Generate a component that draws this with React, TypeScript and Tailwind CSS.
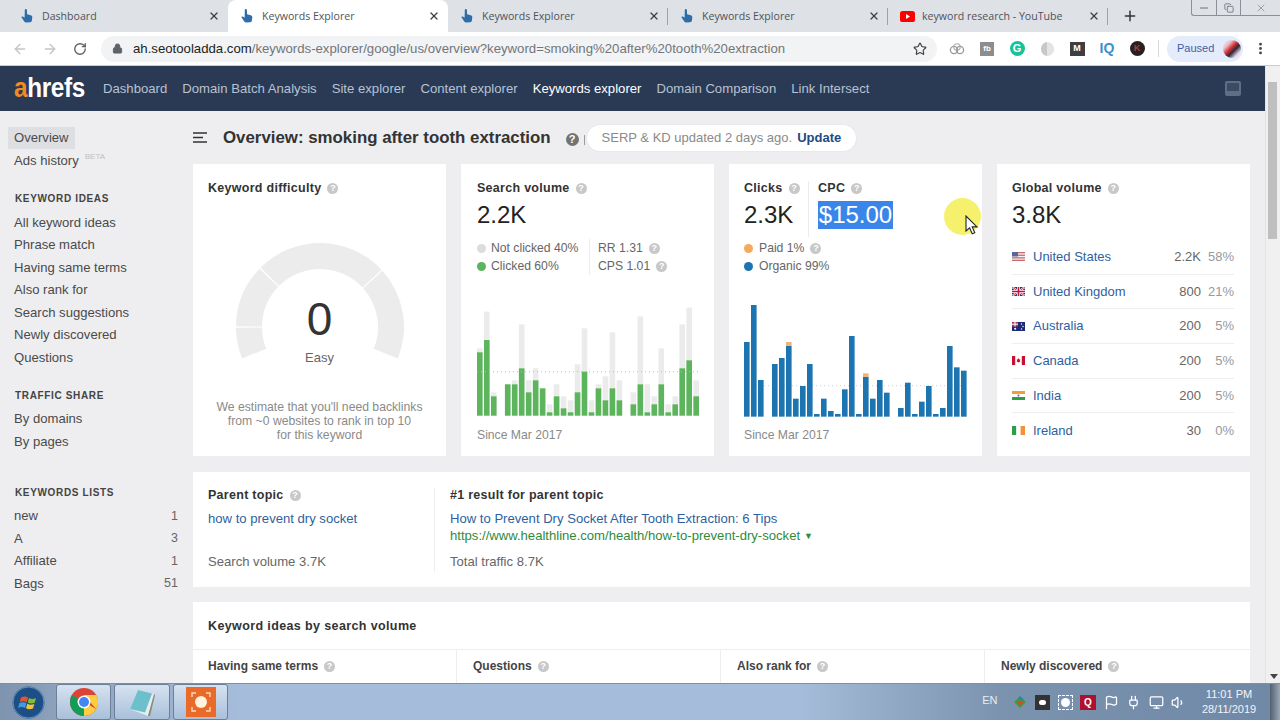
import React from "react";
import { ArrowLeft, ArrowRight, RotateCw, Lock, Star, Plus, X, MoreVertical, Flag, Volume1, Plug, Monitor, Minus, Copy } from "lucide-react";

const Hand = () => (
  <svg width="14" height="16" viewBox="0 0 14 16" className="shrink-0">
    <path d="M5.200 1.200c.7-.6 1.600-.2 1.700.7l.2 4.400 3.600 1c1 .3 1.600 1 1.600 2l-.4 3.200c-.2 1-.8 1.600-1.800 1.700l-4 .2c-.8 0-1.400-.3-1.800-1L1.600 9.600c-.4-.7.5-1.500 1.200-1l1.800 1.200L4.800 2c0-.3.2-.6.4-.8z" fill="#2f6da8" />
  </svg>
);

const Yt = () => (
  <svg width="15" height="11" viewBox="0 0 15 11" className="shrink-0">
    <rect width="15" height="11" rx="2.6" fill="#f00" />
    <path d="M6 3l4 2.500L6 8z" fill="#fff" />
  </svg>
);

const Tab = ({ title, active, yt, sep }: { title: string; active?: boolean; yt?: boolean; sep?: boolean }) => (
  <div className={`relative w-[220px] h-full flex items-center shrink-0 pl-[12px] pr-[8px] ${active ? "bg-white rounded-t-lg" : ""}`}>
    <span className="w-[14px] flex justify-center">{yt ? <Yt /> : <Hand />}</span>
    <span className="ml-[8px] mt-[1px] text-[10.6px] text-[#50535a] flex-1 whitespace-nowrap" style={{ fontFamily: "'Open Sans', sans-serif" }}>{title}</span>
    <X size={12} strokeWidth={2.6} className="text-[#3c4043]" />
    {sep && <span className="absolute right-0 top-[8px] h-[17px] w-px bg-[#9ea2a8]" />}
  </div>
);

const Q = ({ dark, size = 11 }: { dark?: boolean; size?: number }) => (
  <span
    className={`inline-flex items-center justify-center rounded-full text-white font-bold shrink-0 ${dark ? "bg-[#737373]" : "bg-[#c8c8c8]"}`}
    style={{ width: size, height: size, fontSize: size - 2, lineHeight: 1 }}
  >
    ?
  </span>
);

const SideItem = ({ label, count, active }: { label: string; count?: string; active?: boolean }) => (
  <div className="h-[22.5px] flex items-center justify-between text-[13.1px] text-[#4a4a4a] pr-[15px]">
    <span className={`pl-[6px] pr-[6px] ml-[8px] h-[22px] leading-[22px] ${active ? "bg-[#dedfe3]" : ""}`}>{label}</span>
    {count && <span className="text-[#666] text-[12.5px]">{count}</span>}
  </div>
);

const SideHead = ({ label, cls }: { label: string; cls: string }) => (
  <div className={`pl-[15px] h-[14px] leading-[14px] text-[10px] font-bold tracking-[0.65px] text-[#444] ${cls}`}>{label}</div>
);

const greens: [number, number][] = [
  [172, 160], [135, 50], [304, 292], [362, 362], [268, 268], [268, 256], [220, 88], [292, 256],
  [256, 220], [280, 280], [352, 328], [304, 268], [340, 304], [352, 316], [292, 208], [230, 100],
  [352, 316], [280, 268], [316, 244], [280, 112], [316, 256], [362, 362], [328, 292], [268, 64],
  [352, 268], [328, 304], [268, 160], [352, 328], [328, 304], [220, 88], [196, 38], [304, 256],
];
const blues: [number, number?][] = [
  [138], [27], [252], [362], [204], [186], [150, 138], [308], [270], [204], [354], [308], [345], [354], [280], [120],
  [354], [243, 232], [308], [252], [290], [362], [336], [260], [354], [317], [270], [354], [336], [150], [214], [224],
];

const GreenChart = () => (
  <svg width="223" height="121" viewBox="0 0 223 121" className="block">
    {greens.map(([g, t], i) => (
      <g key={i}>
        <rect x={i * 6.98} y={t / 3} width="5.6" height={(362 - t) / 3} fill="#ebebeb" />
        <rect x={i * 6.98} y={g / 3} width="5.6" height={(362 - g) / 3} fill="#5cb55c" />
      </g>
    ))}
    <line x1="0" x2="222" y1="76.7" y2="76.7" stroke="#bdbdbd" strokeDasharray="1 3" />
  </svg>
);

const BlueChart = () => (
  <svg width="224" height="121" viewBox="0 0 224 121" className="block">
    <line x1="0" x2="224" y1="89.7" y2="89.7" stroke="#cfcfcf" strokeDasharray="1 3" />
    {blues.map(([b, o], i) => (
      <g key={i}>
        {o !== undefined && <rect x={i * 7} y={o / 3} width="5.6" height={(b - o) / 3} fill="#f0b47a" />}
        <rect x={i * 7} y={b / 3} width="5.6" height={(362 - b) / 3} fill="#1c75b0" />
      </g>
    ))}
  </svg>
);

const arc = (a0: number, a1: number, R = 84, r = 58, c = 86) => {
  const p = (a: number, q: number) => {
    const t = (a * Math.PI) / 180;
    return `${(c + q * Math.cos(t)).toFixed(2)} ${(c + q * Math.sin(t)).toFixed(2)}`;
  };
  return `M${p(a0, R)}A${R} ${R} 0 0 1 ${p(a1, R)}L${p(a1, r)}A${r} ${r} 0 0 0 ${p(a0, r)}Z`;
};

const Gauge = () => (
  <svg width="172" height="126" viewBox="0 0 172 126" className="block">
    <path d={arc(158, 179.5)} fill="#ececec" />
    <path d={arc(180.5, 224)} fill="#ececec" />
    <path d={arc(225, 317)} fill="#ececec" />
    <path d={arc(318, 382)} fill="#ececec" />
  </svg>
);

const FlagUS = () => (
  <svg width="13" height="9" viewBox="0 0 13 9">
    <rect width="13" height="9" fill="#f3f3f3" />
    <rect y="0" width="13" height="1.3" fill="#c96a70" />
    <rect y="2.6" width="13" height="1.3" fill="#c96a70" />
    <rect y="5.2" width="13" height="1.3" fill="#c96a70" />
    <rect y="7.7" width="13" height="1.3" fill="#c96a70" />
    <rect width="6" height="4.5" fill="#5a659c" />
  </svg>
);
const FlagUK = () => (
  <svg width="13" height="9" viewBox="0 0 13 9">
    <rect width="13" height="9" fill="#2a3570" />
    <path d="M0 0l13 9M13 0L0 9" stroke="#fff" strokeWidth="2" />
    <path d="M0 0l13 9M13 0L0 9" stroke="#c8102e" strokeWidth="0.8" />
    <path d="M6.500 0v9M0 4.500h13" stroke="#fff" strokeWidth="3" />
    <path d="M6.500 0v9M0 4.500h13" stroke="#c8102e" strokeWidth="1.6" />
  </svg>
);
const FlagAU = () => (
  <svg width="13" height="9" viewBox="0 0 13 9">
    <rect width="13" height="9" fill="#1d2a78" />
    <rect width="6" height="4.5" fill="#b23a55" />
    <path d="M0 2.200h6M3 0v4.500" stroke="#fff" strokeWidth="1" />
    <circle cx="3.2" cy="6.8" r="1" fill="#fff" />
    <circle cx="9.5" cy="2" r=".7" fill="#fff" />
    <circle cx="11" cy="4.5" r=".7" fill="#fff" />
    <circle cx="9.5" cy="7" r=".7" fill="#fff" />
  </svg>
);
const FlagCA = () => (
  <svg width="13" height="9" viewBox="0 0 13 9">
    <rect width="13" height="9" fill="#fff" />
    <rect width="3.2" height="9" fill="#c8102e" />
    <rect x="9.8" width="3.2" height="9" fill="#c8102e" />
    <path d="M6.500 2l.8 1.500 1-.3-.4 1.600.6.4-2 1.300-2-1.300.6-.4-.4-1.600 1 .3z" fill="#c8102e" />
  </svg>
);
const FlagIN = () => (
  <svg width="13" height="9" viewBox="0 0 13 9">
    <rect width="13" height="3" fill="#f29c3f" />
    <rect y="3" width="13" height="3" fill="#fff" />
    <rect y="6" width="13" height="3" fill="#2f9c46" />
    <circle cx="6.5" cy="4.5" r="1" fill="#55609c" />
  </svg>
);
const FlagIE = () => (
  <svg width="13" height="9" viewBox="0 0 13 9">
    <rect width="4.4" height="9" fill="#2f9c46" />
    <rect x="4.4" width="4.2" height="9" fill="#fff" />
    <rect x="8.6" width="4.4" height="9" fill="#f2913a" />
  </svg>
);

const countries: [React.ReactNode, string, string, string][] = [
  [<FlagUS />, "United States", "2.2K", "58%"],
  [<FlagUK />, "United Kingdom", "800", "21%"],
  [<FlagAU />, "Australia", "200", "5%"],
  [<FlagCA />, "Canada", "200", "5%"],
  [<FlagIN />, "India", "200", "5%"],
  [<FlagIE />, "Ireland", "30", "0%"],
];

const Title = ({ children }: { children: React.ReactNode }) => (
  <span className="text-[12.5px] font-bold text-[#333] tracking-[0.28px] whitespace-nowrap">{children}</span>
);

const Dot = ({ c }: { c: string }) => <span className={`w-[9px] h-[9px] rounded-full shrink-0 ${c}`} />;

const NavLink = ({ t, active }: { t: string; active?: boolean }) => (
  <span className={`text-[13.15px] whitespace-nowrap ${active ? "text-white" : "text-[#b7c2d3]"}`}>{t}</span>
);

const Ext = ({ children }: { children: React.ReactNode }) => (
  <span className="w-[30px] flex items-center justify-center">{children}</span>
);

const TaskBtn = ({ children, cls }: { children: React.ReactNode; cls: string }) => (
  <div className={`h-[36px] rounded-[3px] border border-[#6b7f97] flex items-center justify-center bg-[linear-gradient(180deg,#d6e2f0,#a9c0da)] ${cls}`}>
    {children}
  </div>
);

export default function App() {
  return (
    <div className="w-[1280px] h-[720px] overflow-hidden flex flex-col bg-[#eeeef0]" style={{ fontFamily: "'Liberation Sans', Arial, sans-serif" }}>
      {/* tab strip */}
      <div className="relative h-[32px] bg-[#dee1e6] flex items-stretch pl-[8px] shrink-0">
        <Tab title="Dashboard" />
        <Tab title="Keywords Explorer" active />
        <Tab title="Keywords Explorer" sep />
        <Tab title="Keywords Explorer" sep />
        <Tab title="keyword research - YouTube" yt sep />
        <Plus size={16} strokeWidth={2.2} className="ml-[14px] mt-[8px] text-[#333]" />
        <div className="absolute right-0 top-0 w-[89px] h-[16px] border border-t-0 border-r-0 border-[#8b8f96] rounded-bl-[3px] flex text-[#6c6f75]">
          <span className="w-[25px] flex items-center justify-center border-r border-[#8b8f96]"><Minus size={12} /></span>
          <span className="w-[24px] flex items-center justify-center border-r border-[#8b8f96]"><Copy size={10} /></span>
          <span className="flex-1 flex items-center justify-center"><X size={12} className="text-[#9b9ea3]" /></span>
        </div>
      </div>

      {/* toolbar */}
      <div className="h-[34px] bg-white flex items-center shrink-0 border-b border-[#c9cbcf] text-[#5f6368]">
        <ArrowLeft size={16} className="ml-[12px] text-[#c2c5ca]" />
        <ArrowRight size={16} className="ml-[14px] text-[#c2c5ca]" />
        <RotateCw size={14} strokeWidth={2.4} className="ml-[15px] text-[#5f6368]" />
        <div className="ml-[14px] w-[836px] h-[26px] rounded-full bg-[#f1f3f4] flex items-center pl-[11px] pr-[10px]">
          <Lock size={11} fill="#5f6368" className="shrink-0" />
          <span className="ml-[10px] text-[13.2px] flex-1 whitespace-nowrap text-[#72767b]">
            <span className="text-[#222]">ah.seotooladda.com</span>/keywords-explorer/google/us/overview?keyword=smoking%20after%20tooth%20extraction
          </span>
          <Star size={14} strokeWidth={2} className="text-[#444]" />
        </div>
        <div className="ml-[5px] flex items-center">
          <Ext>
            <svg width="16" height="12" viewBox="0 0 16 12"><circle cx="5" cy="7" r="3.6" fill="none" stroke="#999" strokeWidth="1.3" /><circle cx="11" cy="7" r="3.6" fill="none" stroke="#999" strokeWidth="1.3" /><circle cx="8" cy="4" r="3.2" fill="none" stroke="#aaa" strokeWidth="1.1" /></svg>
          </Ext>
          <Ext><span className="w-[14px] h-[14px] bg-[#8d8d8d] text-white text-[8px] font-bold flex items-center justify-center">fb</span></Ext>
          <Ext><span className="w-[15px] h-[15px] rounded-full bg-[#15c39a] text-white text-[11px] font-bold flex items-center justify-center">G</span></Ext>
          <Ext><span className="w-[13px] h-[14px] rounded-full bg-[linear-gradient(90deg,#c8c8c8_50%,#e4e4e4_50%)]" /></Ext>
          <Ext><span className="w-[15px] h-[14px] bg-[#3f3f3f] text-white text-[9px] font-bold flex items-center justify-center">M</span></Ext>
          <Ext><span className="text-[14px] font-bold text-[#3d8fc9]">IQ</span></Ext>
          <Ext><span className="w-[15px] h-[15px] rounded-full bg-[#26211f] text-[#b23a3a] text-[9px] font-bold flex items-center justify-center">K</span></Ext>
        </div>
        <span className="ml-[6px] w-px h-[17px] bg-[#d5d7da]" />
        <div className="ml-[8px] w-[76px] h-[26px] rounded-full bg-[#e4ebfa] flex items-center pl-[10px]">
          <span className="text-[11px] text-[#3f5fa8]">Paused</span>
          <span className="ml-[9px] w-[18px] h-[18px] rounded-full bg-[linear-gradient(135deg,#e9c6d6_25%,#d32f2f_45%,#2a2a3a_60%,#e9d6e6_80%)]" />
        </div>
        <MoreVertical size={15} strokeWidth={2.6} className="ml-[10px] text-[#444]" />
      </div>

      {/* page + scrollbar */}
      <div className="flex-1 flex min-h-0">
        <div className="w-[1265px] flex flex-col min-h-0">
          {/* nav */}
          <div className="h-[45px] bg-[#2a3a55] flex items-center shrink-0 pl-[14px] pr-[24px]">
            <span className="w-[71px] text-[27px] font-bold tracking-[-0.4px] leading-none text-white inline-block origin-left scale-x-90 whitespace-nowrap"><span className="text-[#f08a24]">a</span>hrefs</span>
            <div className="ml-[18px] flex gap-[15px]">
              <NavLink t="Dashboard" />
              <NavLink t="Domain Batch Analysis" />
              <NavLink t="Site explorer" />
              <NavLink t="Content explorer" />
              <NavLink t="Keywords explorer" active />
              <NavLink t="Domain Comparison" />
              <NavLink t="Link Intersect" />
            </div>
            <div className="ml-auto w-[16px] h-[15px] rounded-[2px] bg-[#5f6d85] flex items-start justify-center pt-[2px]">
              <span className="w-[12px] h-[8px] bg-[#3c4a63]" />
            </div>
          </div>

          {/* body */}
          <div className="flex-1 flex min-h-0">
            {/* sidebar */}
            <aside className="w-[193px] shrink-0 pt-[16px]">
              <SideItem label="Overview" active />
              <div className="h-[22.5px] flex items-center text-[13.1px] text-[#4a4a4a] pl-[14px]">
                Ads history
                <span className="ml-[6px] mb-[8px] text-[8px] text-[#c0c0c0]">BETA</span>
              </div>
              <SideHead label="KEYWORD IDEAS" cls="mt-[20px] mb-[5.5px]" />
              {["All keyword ideas", "Phrase match", "Having same terms", "Also rank for", "Search suggestions", "Newly discovered", "Questions"].map((t) => (
                <SideItem key={t} label={t} />
              ))}
              <SideHead label="TRAFFIC SHARE" cls="mt-[19.5px] mb-[5.5px]" />
              <SideItem label="By domains" />
              <SideItem label="By pages" />
              <SideHead label="KEYWORDS LISTS" cls="mt-[33px] mb-[5px]" />
              <SideItem label="new" count="1" />
              <SideItem label="A" count="3" />
              <SideItem label="Affiliate" count="1" />
              <SideItem label="Bags" count="51" />
            </aside>

            {/* main */}
            <main className="flex-1 min-w-0 pr-[15px] overflow-hidden">
              <div className="h-[53px] flex items-center">
                <svg width="14" height="11" viewBox="0 0 14 11" className="shrink-0">
                  <path d="M0 1h14M0 5.500h10M0 10h14" stroke="#333" strokeWidth="1.6" />
                </svg>
                <h1 className="ml-[16px] text-[16.85px] font-bold text-[#333] whitespace-nowrap">Overview: smoking after tooth extraction</h1>
                <span className="ml-[15px]"><Q dark size={13} /></span>
                <span className="ml-[5px] w-px h-[10px] mt-[4px] bg-[#999]" />
                <div className="ml-[2px] w-[269px] h-[26px] rounded-full bg-white shadow-[0_0_2px_rgba(0,0,0,0.08)] flex items-center pl-[15px] text-[13px] whitespace-nowrap text-[#8a8a8a]">
                  SERP &amp; KD updated 2 days ago.<span className="ml-[5px] font-bold text-[13px] text-[#1e4a84]">Update</span>
                </div>
              </div>

              <div className="grid grid-cols-4 gap-[15px] h-[292px]">
                {/* KD */}
                <div className="bg-white flex flex-col pl-[15px] pr-[15px] pt-[17px] items-start">
                  <div className="flex items-center gap-[6px] h-[14px]"><Title>Keyword difficulty</Title><Q /></div>
                  <div className="relative self-center mt-[46px] w-[172px]">
                    <Gauge />
                    <div className="absolute inset-x-0 top-[53px] text-center text-[46px] leading-[50px] text-[#333]">0</div>
                    <div className="absolute inset-x-0 top-[109px] text-center text-[13px] leading-[16px] text-[#666]">Easy</div>
                  </div>
                  <p className="self-center mt-[33px] text-center text-[12.2px] leading-[14.2px] text-[#8a8a8a] whitespace-nowrap">
                    We estimate that you'll need backlinks<br />from ~0 websites to rank in top 10<br />for this keyword
                  </p>
                </div>

                {/* Search volume */}
                <div className="bg-white flex flex-col pl-[16px] pt-[17px]">
                  <div className="flex items-center gap-[6px] h-[14px]"><Title>Search volume</Title><Q /></div>
                  <div className="mt-[5px] h-[30px] text-[24px] leading-[30px] text-[#222]">2.2K</div>
                  <div className="mt-[9px] flex h-[36px] text-[12.2px] text-[#666]">
                    <div className="w-[112px] flex flex-col">
                      <div className="h-[18px] flex items-center gap-[5px]"><Dot c="bg-[#dcdcdc]" />Not clicked 40%</div>
                      <div className="h-[18px] flex items-center gap-[5px]"><Dot c="bg-[#5cb55c]" />Clicked 60%</div>
                    </div>
                    <div className="border-l border-[#ececec] pl-[8px] flex flex-col">
                      <div className="h-[18px] flex items-center gap-[6px]">RR 1.31 <Q /></div>
                      <div className="h-[18px] flex items-center gap-[6px]">CPS 1.01 <Q /></div>
                    </div>
                  </div>
                  <div className="mt-[20px]"><GreenChart /></div>
                  <div className="mt-[11.5px] text-[12.2px] leading-[14px] text-[#8a8a8a]">Since Mar 2017</div>
                </div>

                {/* Clicks/CPC */}
                <div className="relative bg-white flex flex-col pl-[15px] pt-[17px]">
                  <div className="flex h-[56px]">
                    <div className="w-[65px] border-r border-[#ececec]">
                      <div className="flex items-center gap-[6px] h-[14px]"><Title>Clicks</Title><Q /></div>
                      <div className="mt-[5px] text-[24px] leading-[30px] text-[#222]">2.3K</div>
                    </div>
                    <div className="pl-[9px]">
                      <div className="flex items-center gap-[6px] h-[14px]"><Title>CPC</Title><Q /></div>
                      <div className="mt-[6px] h-[28px] w-[75px] bg-[#3a86e8] text-white text-[24px] leading-[28px] text-center">$15.00</div>
                    </div>
                  </div>
                  <div className="mt-[2px] flex flex-col h-[36px] text-[12.2px] text-[#666]">
                    <div className="h-[18px] flex items-center gap-[6px]"><Dot c="bg-[#f4a95f]" />Paid 1% <Q /></div>
                    <div className="h-[18px] flex items-center gap-[6px]"><Dot c="bg-[#1c75b0]" />Organic 99%</div>
                  </div>
                  <div className="mt-[21px]"><BlueChart /></div>
                  <div className="mt-[10.5px] text-[12.2px] leading-[14px] text-[#8a8a8a]">Since Mar 2017</div>
                  {/* highlighted cursor */}
                  <div className="absolute left-[215px] top-[34px] w-[37px] h-[37px] rounded-full bg-[#f6f16c]" />
                  <svg width="14" height="20" viewBox="0 0 14 20" className="absolute left-[236px] top-[51px]">
                    <path d="M1 1v15l3.600-3.200 2.600 6 2.600-1.100-2.600-5.800H12z" fill="#fff" stroke="#222" strokeWidth="1.1" />
                  </svg>
                </div>

                {/* Global */}
                <div className="bg-white flex flex-col pl-[15px] pr-[16px] pt-[17px]">
                  <div className="flex items-center gap-[6px] h-[14px]"><Title>Global volume</Title><Q /></div>
                  <div className="mt-[5px] h-[30px] text-[24px] leading-[30px] text-[#222]">3.8K</div>
                  <div className="mt-[10px] flex flex-col">
                    {countries.map(([f, n, v, p], i) => (
                      <div key={n} className={`h-[34.7px] flex items-center text-[13px] ${i < 5 ? "border-b border-[#eeeeee]" : ""}`}>
                        <span className="w-[21px] flex items-center shrink-0">{f}</span>
                        <span className="text-[#2f5f9e]">{n}</span>
                        <span className="ml-auto text-[#666]">{v}</span>
                        <span className="w-[33px] text-right text-[#999]">{p}</span>
                      </div>
                    ))}
                  </div>
                </div>
              </div>

              {/* parent */}
              <div className="mt-[16px] h-[115px] bg-white flex pt-[15.5px] pb-[15px] pl-[15px] text-[13.1px]">
                <div className="w-[227px] border-r border-[#eeeeee] flex flex-col">
                  <div className="flex items-center gap-[6px] h-[16px]"><Title>Parent topic</Title><Q /></div>
                  <a className="mt-[7px] h-[16px] leading-[16px] text-[#2f5f9e]">how to prevent dry socket</a>
                  <span className="mt-[27px] h-[16px] leading-[16px] text-[#666]">Search volume 3.7K</span>
                </div>
                <div className="pl-[15px] flex flex-col">
                  <div className="h-[16px] flex items-center"><Title>#1 result for parent topic</Title></div>
                  <a className="mt-[7px] h-[16px] leading-[16px] text-[#2f5f9e]">How to Prevent Dry Socket After Tooth Extraction: 6 Tips</a>
                  <span className="mt-[1px] h-[16px] leading-[16px] text-[#2e8b3d] flex items-center gap-[4px] whitespace-nowrap">https://www.healthline.com/health/how-to-prevent-dry-socket <span className="text-[9px]">▼</span></span>
                  <span className="mt-[10px] h-[16px] leading-[16px] text-[#666]">Total traffic 8.7K</span>
                </div>
              </div>

              {/* ideas */}
              <div className="mt-[15px] bg-white h-[100px]">
                <div className="h-[47px] flex items-center pl-[15px] pt-[1px]"><span className="text-[12.5px] font-bold text-[#333] tracking-[0.38px] whitespace-nowrap">Keyword ideas by search volume</span></div>
                <div className="grid grid-cols-[264px_264px_264px_1fr] h-[53px] border-t border-[#eeeeee]">
                  {["Having same terms", "Questions", "Also rank for", "Newly discovered"].map((t, i) => (
                    <div key={t} className={`pt-[8px] ${i < 3 ? "border-r border-[#eeeeee]" : ""} ${i > 0 ? "pl-[16px]" : "pl-[15px]"}`}>
                      <div className="flex items-center gap-[6px] h-[16px]"><span className="text-[12px] font-bold text-[#444] whitespace-nowrap">{t}</span><Q /></div>
                    </div>
                  ))}
                </div>
              </div>
            </main>
          </div>
        </div>

        {/* scrollbar */}
        <div className="w-[15px] relative bg-[#f0f0f0] shrink-0 border-l border-[#e4e4e4]">
          <div className="mt-[16px] ml-[2px] w-[9px] h-[157px] bg-[#bfbfbf]" />
          <div className="absolute bottom-[4px] left-[4px] w-0 h-0 border-l-[4px] border-r-[4px] border-t-[5px] border-l-transparent border-r-transparent border-t-[#444]" />
        </div>
      </div>

      {/* taskbar */}
      <div className="h-[37px] shrink-0 border-t border-[#7d8fa5] flex items-center bg-[linear-gradient(90deg,#7e93ad_0,#8ca2bd_60px,#a5bcda_240px,#a5bcda_800px,#7b93ae_1000px,#6f88a6_1280px)]">
        <div className="w-[56px] flex justify-center">
          <svg width="33" height="33" viewBox="0 0 33 33">
            <circle cx="16.5" cy="16.5" r="16" fill="#1c4f86" />
            <circle cx="16.5" cy="16.5" r="15.5" fill="none" stroke="#7ba3c9" strokeWidth=".8" />
            <path d="M9 11.500c2.500-1.300 5-1.200 7 .1l-1.300 4.600c-2-1.200-4.200-1.300-7-.2z" fill="#e8552c" />
            <path d="M17 12c2 1.200 4.300 1.300 7 .1l-1.300 4.600c-2.500 1.100-4.900 1-7-.2z" fill="#84bb2f" />
            <path d="M7.400 17c2.700-1 5-.9 7 .2L13.100 22c-2-1.200-4.400-1.300-7-.2z" fill="#3e9be0" />
            <path d="M15.300 17.700c2 1.200 4.500 1.300 7 .2L21 22.500c-2.500 1.100-5 1-7-.2z" fill="#f7c52e" />
          </svg>
        </div>
        <div className="flex gap-[3px]">
          <TaskBtn cls="w-[55px]">
            <svg width="28" height="28" viewBox="0 0 28 28">
              <circle cx="14" cy="14" r="14" fill="#db4437" />
              <path d="M14 14L26.100 21A14 14 0 0 1 14 28z" fill="#ffcd40" />
              <path d="M14 14L14 28A14 14 0 0 1 1.900 7z" fill="#0f9d58" />
              <path d="M14 7h12.100A14 14 0 0 1 26.100 21z" fill="#ffcd40" />
              <circle cx="14" cy="14" r="6.500" fill="#fff" />
              <circle cx="14" cy="14" r="5" fill="#4285f4" />
            </svg>
          </TaskBtn>
          <TaskBtn cls="w-[56px]">
            <svg width="30" height="30" viewBox="0 0 30 30">
              <path d="M3 22L11 3l16 4-6 22z" fill="#e6eef0" />
              <path d="M3 22L11 3l14 3.500-7 19z" fill="#6cc0cc" />
              <path d="M21 29l6-22 1 1-5 21z" fill="#8a8a78" />
            </svg>
          </TaskBtn>
          <TaskBtn cls="w-[55px]">
            <svg width="30" height="30" viewBox="0 0 30 30">
              <rect width="30" height="30" fill="#ea6a2a" />
              <circle cx="15" cy="15" r="6" fill="#fff3dc" />
              <path d="M6 10V6h4M20 6h4v4M24 20v4h-4M10 24H6v-4" fill="none" stroke="#fbd9bd" strokeWidth="1.4" />
            </svg>
          </TaskBtn>
        </div>
        <div className="ml-auto flex items-center text-white">
          <span className="text-[11px] mr-[14px] mb-[4px] text-[#e8edf3]">EN</span>
          <div className="flex items-center gap-[7.5px]">
            <svg width="16" height="16" viewBox="0 0 16 16"><path d="M2 8l6-6 6 6-6 6z" fill="#3f9b3f" /><path d="M4 7h8l-4 5z" fill="#d84b2a" /><path d="M8 2l4 4H6z" fill="#2d7ec9" /></svg>
            <span className="w-[15px] h-[15px] bg-[#333] flex items-center justify-center"><span className="w-[7px] h-[5px] bg-white rounded-full" /></span>
            <span className="w-[15px] h-[15px] border border-dashed border-white flex items-center justify-center"><span className="w-[9px] h-[9px] rounded-full bg-white" /></span>
            <span className="w-[16px] h-[15px] bg-[#b01030] flex items-center justify-center text-white text-[10px] font-bold">Q</span>
            <Flag size={15} className="text-white" />
            <Plug size={15} className="text-white" />
            <Monitor size={15} className="text-white" />
            <Volume1 size={15} className="text-white" />
          </div>
          <div className="ml-[12px] w-[62px] flex flex-col items-center text-[11px] leading-[15px] text-[#f2f5f8] whitespace-nowrap">
            <span>11:01 PM</span>
            <span>28/11/2019</span>
          </div>
          <span className="ml-[10px] w-[10px] h-[36px] bg-[linear-gradient(90deg,#55606e,#9aa8b8)]" />
        </div>
      </div>
    </div>
  );
}
